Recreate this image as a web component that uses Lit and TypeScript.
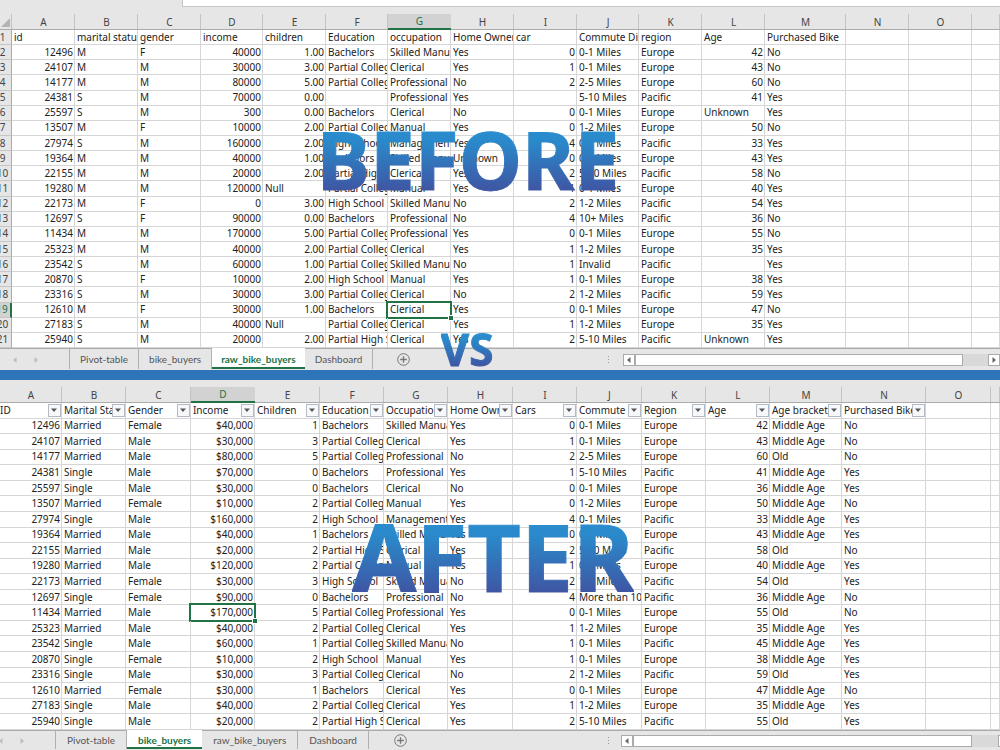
import { LitElement, html, css, svg, nothing } from "lit";
import { customElement, property } from "lit/decorators.js";
import { classMap } from "lit/directives/class-map.js";

type Cell = string;

interface Column {
  letter: string;
  width: number;
  numeric?: boolean;
}

interface Sheet {
  columns: Column[];
  header: Cell[];
  rows: Cell[][];
  tabs: string[];
  activeTab: string;
  selected: { row: number; col: number };
}

const columns = (widths: number[], numeric: string): Column[] =>
  widths.map((width, i) => {
    const letter = i < 15 ? String.fromCharCode(65 + i) : "";
    return { letter, width, numeric: letter !== "" && numeric.includes(letter) };
  });

const parse = (text: string): Cell[][] =>
  text.trim().split("\n").map((line) => line.trim().split("|"));

const raw: Sheet = {
  columns: columns([63, 63, 63, 62, 63, 62, 63, 63, 63, 62, 63, 63, 81, 63, 63, 28], "ADEIL"),
  header: ["id", "marital status", "gender", "income", "children", "Education", "occupation", "Home Owner", "car", "Commute Distance", "region", "Age", "Purchased Bike"],
  rows: parse(`
    12496|M|F|40000|1.00|Bachelors|Skilled Manual|Yes|0|0-1 Miles|Europe|42|No
    24107|M|M|30000|3.00|Partial College|Clerical|Yes|1|0-1 Miles|Europe|43|No
    14177|M|M|80000|5.00|Partial College|Professional|No|2|2-5 Miles|Europe|60|No
    24381|S|M|70000|0.00||Professional|Yes||5-10 Miles|Pacific|41|Yes
    25597|S|M|300|0.00|Bachelors|Clerical|No|0|0-1 Miles|Europe|Unknown|Yes
    13507|M|F|10000|2.00|Partial College|Manual|Yes|0|1-2 Miles|Europe|50|No
    27974|S|M|160000|2.00|High School|Management|Yes|4|0-1 Miles|Pacific|33|Yes
    19364|M|M|40000|1.00|Bachelors|Skilled Manual|Unknown|0|0-1 Miles|Europe|43|Yes
    22155|M|M|20000|2.00|Partial High School|Clerical|Yes|2|5-10 Miles|Pacific|58|No
    19280|M|M|120000|Null|Partial College|Manual|Yes|1|0-1 Miles|Europe|40|Yes
    22173|M|F|0|3.00|High School|Skilled Manual|No|2|1-2 Miles|Pacific|54|Yes
    12697|S|F|90000|0.00|Bachelors|Professional|No|4|10+ Miles|Pacific|36|No
    11434|M|M|170000|5.00|Partial College|Professional|Yes|0|0-1 Miles|Europe|55|No
    25323|M|M|40000|2.00|Partial College|Clerical|Yes|1|1-2 Miles|Europe|35|Yes
    23542|S|M|60000|1.00|Partial College|Skilled Manual|No|1|Invalid|Pacific||Yes
    20870|S|F|10000|2.00|High School|Manual|Yes|1|0-1 Miles|Europe|38|Yes
    23316|S|M|30000|3.00|Partial College|Clerical|No|2|1-2 Miles|Pacific|59|Yes
    12610|M|F|30000|1.00|Bachelors|Clerical|Yes|0|0-1 Miles|Europe|47|No
    27183|S|M|40000|Null|Partial College|Clerical|Yes|1|1-2 Miles|Europe|35|Yes
    25940|S|M|20000|2.00|Partial High School|Clerical|Yes|2|5-10 Miles|Pacific|Unknown|Yes`),
  tabs: ["Pivot-table", "bike_buyers", "raw_bike_buyers", "Dashboard"],
  activeTab: "raw_bike_buyers",
  selected: { row: 17, col: 6 },
};

const clean: Sheet = {
  columns: columns([62, 64, 65, 64, 65, 64, 64, 65, 64, 65, 64, 64, 72, 84, 65, 9], "ADEIL"),
  header: ["ID", "Marital Status", "Gender", "Income", "Children", "Education", "Occupation", "Home Owner", "Cars", "Commute Distance", "Region", "Age", "Age brackets", "Purchased Bike"],
  rows: parse(`
    12496|Married|Female|$40,000|1|Bachelors|Skilled Manual|Yes|0|0-1 Miles|Europe|42|Middle Age|No
    24107|Married|Male|$30,000|3|Partial College|Clerical|Yes|1|0-1 Miles|Europe|43|Middle Age|No
    14177|Married|Male|$80,000|5|Partial College|Professional|No|2|2-5 Miles|Europe|60|Old|No
    24381|Single|Male|$70,000|0|Bachelors|Professional|Yes|1|5-10 Miles|Pacific|41|Middle Age|Yes
    25597|Single|Male|$30,000|0|Bachelors|Clerical|No|0|0-1 Miles|Europe|36|Middle Age|Yes
    13507|Married|Female|$10,000|2|Partial College|Manual|Yes|0|1-2 Miles|Europe|50|Middle Age|No
    27974|Single|Male|$160,000|2|High School|Management|Yes|4|0-1 Miles|Pacific|33|Middle Age|Yes
    19364|Married|Male|$40,000|1|Bachelors|Skilled Manual|Yes|0|0-1 Miles|Europe|43|Middle Age|Yes
    22155|Married|Male|$20,000|2|Partial High School|Clerical|Yes|2|5-10 Miles|Pacific|58|Old|No
    19280|Married|Male|$120,000|2|Partial College|Manual|Yes|1|0-1 Miles|Europe|40|Middle Age|Yes
    22173|Married|Female|$30,000|3|High School|Skilled Manual|No|2|1-2 Miles|Pacific|54|Old|Yes
    12697|Single|Female|$90,000|0|Bachelors|Professional|No|4|More than 10 Miles|Pacific|36|Middle Age|No
    11434|Married|Male|$170,000|5|Partial College|Professional|Yes|0|0-1 Miles|Europe|55|Old|No
    25323|Married|Male|$40,000|2|Partial College|Clerical|Yes|1|1-2 Miles|Europe|35|Middle Age|Yes
    23542|Single|Male|$60,000|1|Partial College|Skilled Manual|No|1|0-1 Miles|Pacific|45|Middle Age|Yes
    20870|Single|Female|$10,000|2|High School|Manual|Yes|1|0-1 Miles|Europe|38|Middle Age|Yes
    23316|Single|Male|$30,000|3|Partial College|Clerical|No|2|1-2 Miles|Pacific|59|Old|Yes
    12610|Married|Female|$30,000|1|Bachelors|Clerical|Yes|0|0-1 Miles|Europe|47|Middle Age|No
    27183|Single|Male|$40,000|2|Partial College|Clerical|Yes|1|1-2 Miles|Europe|35|Middle Age|Yes
    25940|Single|Male|$20,000|2|Partial High School|Clerical|Yes|2|5-10 Miles|Pacific|55|Old|Yes`),
  tabs: ["Pivot-table", "bike_buyers", "raw_bike_buyers", "Dashboard"],
  activeTab: "bike_buyers",
  selected: { row: 12, col: 3 },
};

const triangle = (points: string) =>
  html`<svg width="8" height="8" viewBox="0 0 8 8" aria-hidden="true">${svg`<polygon points=${points} fill="currentColor" />`}</svg>`;
const left = () => triangle("5.5,1 5.5,7 2,4");
const right = () => triangle("2.5,1 2.5,7 6,4");
const down = () => triangle("1,2.5 7,2.5 4,6");

@customElement("sheet-grid")
export class SheetGrid extends LitElement {
  @property({ attribute: false }) sheet!: Sheet;
  @property({ type: Boolean }) numbered = false;
  @property({ type: Boolean }) filters = false;

  static styles = css`
    :host { display: grid; min-height: 0; }
    table { width: 100%; height: 100%; table-layout: fixed; border-collapse: separate; border-spacing: 0; background: #fff; }
    .gutter-col { width: 12px; }
    th, td { padding: 0; font-weight: 400; overflow: hidden; white-space: nowrap; box-sizing: border-box; }
    .letters { height: 23px; }
    .letters th {
      color: #444; background: linear-gradient(to bottom, transparent 7px, #c3c3c3 7px) right / 1px 100% no-repeat, #e6e6e6;
      border-bottom: 1px solid #ababab; padding-top: 7px; line-height: 14px; text-align: center; vertical-align: middle;
    }
    .letters .current { color: #217346; background: linear-gradient(to bottom, #e6e6e6 7px, #d2d2d2 7px); border-bottom: 2px solid #217346; }
    .letters .corner { text-align: right; padding: 8px 2px 0 0; color: #b4b4b4; }
    .corner svg { display: block; margin-left: auto; }
    .row-number { background: #e6e6e6; color: #444; border-right: 1px solid #ababab; border-bottom: 1px solid #c6c6c6; }
    .row-number .text { display: flex; justify-content: center; margin: 0 6px 0 0; padding: 0; overflow: visible; }
    .row-number.current { background: #d2d2d2; color: #217346; border-right: 2px solid #217346; }
    td { border-right: 1px solid #d6d6d6; border-bottom: 1px solid #d6d6d6; color: #222; text-align: left; position: relative; }
    .text { overflow: hidden; padding: 0 0 0 2px; line-height: 13px; }
    .numeric .text { text-align: right; padding: 0 1px 0 0; }
    .flush .text { padding-left: 0; }
    .filter { display: flex; align-items: center; }
    .filter .text { flex: 1; min-width: 0; }
    .filter button {
      flex: none; width: 13px; height: 13px; padding: 0; display: grid; place-items: center;
      border: 1px solid #b4bac4; background: #f6f8fb; color: #555;
    }
    .selected { overflow: visible; }
    .selected::after { content: ""; position: absolute; inset: -2px -2px -2px -2px; border: 2px solid #217346; }
    .selected::before { content: ""; position: absolute; right: -3px; bottom: -3px; width: 4px; height: 4px; background: #217346; outline: 1px solid #fff; z-index: 1; }
  `;

  private headerCell(text: string, i: number) {
    if (this.filters && text) {
      return html`<td class=${classMap({ flush: i === 0 })}>
        <div class="filter"><div class="text">${text}</div><button aria-label="Filter ${text}">${down()}</button></div>
      </td>`;
    }
    return html`<td><div class="text">${text}</div></td>`;
  }

  private bodyCell(text: string, row: number, col: number) {
    const { columns, selected } = this.sheet;
    const numeric = !!columns[col].numeric && /^[$\d]/.test(text);
    return html`<td class=${classMap({ numeric, selected: selected.row === row && selected.col === col })}><div class="text">${text}</div></td>`;
  }

  render() {
    const { columns, header, rows, selected } = this.sheet;
    const gutter = (n: number, current = false) =>
      this.numbered ? html`<th scope="row" class=${classMap({ "row-number": true, current })}><div class="text">${n}</div></th>` : nothing;
    return html`<table>
      <colgroup>
        ${this.numbered ? html`<col class="gutter-col" />` : nothing}
        ${columns.map((c) => html`<col style="width:${c.width / 10}%" />`)}
      </colgroup>
      <thead>
        <tr class="letters">
          ${this.numbered ? html`<th class="corner"><svg width="9" height="9" viewBox="0 0 9 9" aria-hidden="true"><polygon points="9,0 9,9 0,9" fill="currentColor" /></svg></th>` : nothing}
          ${columns.map((c, i) => html`<th scope="col" class=${classMap({ current: i === selected.col })}>${c.letter}</th>`)}
        </tr>
      </thead>
      <tbody>
        <tr>${gutter(1)}${columns.map((_, i) => this.headerCell(header[i] ?? "", i))}</tr>
        ${rows.map((r, y) => html`<tr>${gutter(y + 2, y === selected.row)}${columns.map((_, x) => this.bodyCell(r[x] ?? "", y, x))}</tr>`)}
      </tbody>
    </table>`;
  }
}

@customElement("sheet-tabs")
export class SheetTabs extends LitElement {
  @property({ attribute: false }) tabs: string[] = [];
  @property() active = "";
  @property({ type: Boolean }) shifted = false;

  static styles = css`
    :host { display: flex; align-items: stretch; height: 22px; box-sizing: border-box; border-top: 1px solid #ababab; background: #e6e6e6; font-family: Lato, "Noto Sans", sans-serif; }
    :host([shifted]) { height: 20px; }
    button { font: inherit; color: inherit; background: none; border: 0; margin: 0; padding: 0; display: grid; place-items: center; }
    .sheets { flex: 1 1 620px; min-width: 0; display: flex; align-items: stretch; color: #555; }
    .arrows { display: flex; align-items: center; gap: 13px; width: 69px; box-sizing: border-box; padding-left: 11px; color: #bdbdbd; }
    .arrows.shifted { width: 55px; padding-left: 0; }
    .arrows.shifted button:first-child { margin-left: -3px; }
    .tab { flex: none; padding: 0 10px; margin-bottom: 1px; font-size: 10px; border-right: 1px solid #b0b0b0; }
    .arrows + .tab { border-left: 1px solid #b0b0b0; }
    .tab.active { margin: -1px 0 1px; padding: 2px 9px 0; background: #fff; color: #217346; font-weight: 700; border: 0; border-bottom: 2px solid #217346; }
    :host([shifted]) .tab { padding-left: 11px; padding-right: 11px; }
    .add { margin-left: 24px; color: #777; }
    .scroll { flex: 1 1 380px; display: flex; align-items: center; color: #666; }
    .grip { width: 5px; color: #999; display: grid; margin-right: 12px; margin-left: -14px; }
    .track { flex: 1; display: flex; align-items: center; background: #d9d9d9; height: 12px; }
    .track button { width: 12px; height: 12px; box-sizing: border-box; border: 1px solid #ababab; background: #fff; }
    .run { flex: 1; display: flex; height: 12px; }
    .thumb { flex: 0 0 93%; box-sizing: border-box; background: #fff; border: 1px solid #ababab; }
    .track.shifted { margin: 0 -10px 0 -2px; }
    :host([shifted]) .add { margin-left: 25px; }
  `;

  render() {
    return html`
      <div class="sheets">
        <div class=${classMap({ arrows: true, shifted: this.shifted })}>
          <button aria-label="Previous sheets">${left()}</button>
          <button aria-label="Next sheets">${right()}</button>
        </div>
        ${this.tabs.map((t) => html`<button class=${classMap({ tab: true, active: t === this.active })}>${t}</button>`)}
        <button class="add" aria-label="New sheet">
          <svg width="13" height="13" viewBox="0 0 13 13" fill="none" stroke="currentColor" aria-hidden="true">
            <circle cx="6.5" cy="6.5" r="5.8" /><path d="M6.5 3.2v6.6M3.2 6.5h6.6" stroke-width="1.3" />
          </svg>
        </button>
      </div>
      <div class="scroll">
        <svg class="grip" width="3" height="10" viewBox="0 0 3 10" fill="currentColor" aria-hidden="true">
          <rect x="1" y="1" width="1" height="1" /><rect x="1" y="4" width="1" height="1" /><rect x="1" y="7" width="1" height="1" />
        </svg>
        <div class=${classMap({ track: true, shifted: this.shifted })}>
          <button aria-label="Scroll left">${left()}</button>
          <div class="run"><div class="thumb"></div></div>
          <button aria-label="Scroll right">${right()}</button>
        </div>
      </div>`;
  }
}

@customElement("app-root")
export class AppRoot extends LitElement {
  static styles = css`
    :host {
      display: grid; grid-template-rows: 1fr 10px 1fr; min-height: 100vh; position: relative; overflow: hidden;
      font-family: "Noto Sans", "Open Sans", sans-serif; font-size: 10px; background: #e6e6e6;
    }
    .pane { position: relative; display: flex; flex-direction: column; min-width: 0; }
    .pane sheet-grid { flex: 1; }
    .formula { height: 7px; box-sizing: border-box; margin-left: 182px; background: #fff; border-left: 1px solid #c6c6c6; border-bottom: 1px solid #c6c6c6; }
    .divider { background: #2e74b8; }
    .caption {
      position: absolute; margin: 0; transform: translate(-50%, -50%); z-index: 2; line-height: 1; font-weight: 700; pointer-events: none;
      background: linear-gradient(#2a8dce 15%, #2a88c9 30%, #3f55a3 90%); -webkit-background-clip: text; background-clip: text; color: transparent;
      -webkit-text-stroke: 1px transparent;
    }
    .before { top: 159px; left: 468px; font-size: 80px; }
    .after { top: 176px; left: 493px; font-size: 93px; }
    .vs { top: 349px; left: 467px; font-size: 44px; }
  `;

  render() {
    return html`
      <section class="pane">
        <div class="formula"></div>
        <sheet-grid numbered .sheet=${raw}></sheet-grid>
        <sheet-tabs .tabs=${raw.tabs} active=${raw.activeTab}></sheet-tabs>
        <h1 class="caption before">BEFORE</h1>
      </section>
      <div class="divider"></div>
      <section class="pane">
        <sheet-grid filters .sheet=${clean}></sheet-grid>
        <sheet-tabs shifted .tabs=${clean.tabs} active=${clean.activeTab}></sheet-tabs>
        <h1 class="caption after">AFTER</h1>
      </section>
      <p class="caption vs">VS</p>`;
  }
}
